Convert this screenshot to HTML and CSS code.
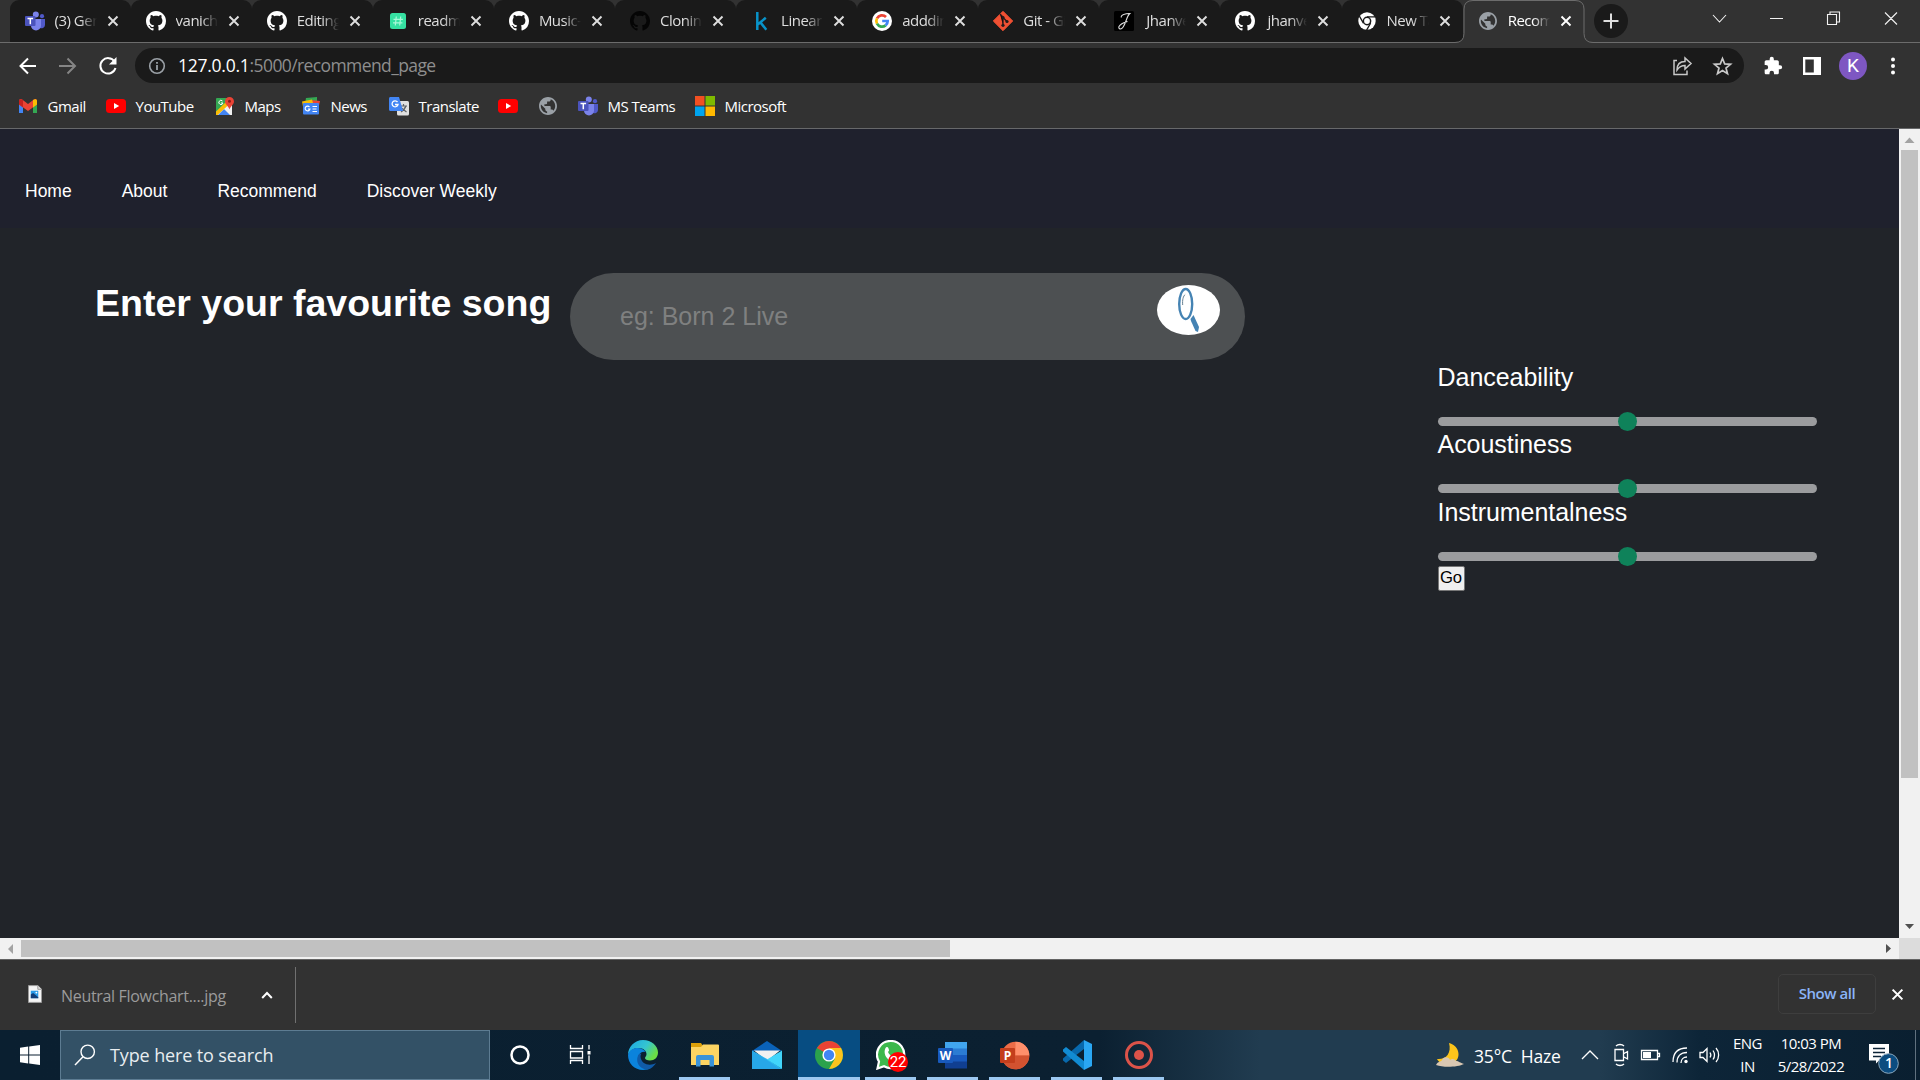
FILE: index.html
```html
<!DOCTYPE html>
<html lang="en">
<head>
<meta charset="utf-8">
<title>Recommend</title>
<link rel="stylesheet" href="styles.css">
</head>
<body>
<svg class="defs" aria-hidden="true">
  <symbol id="github" viewBox="0 0 16 16"><path fill="currentColor" d="M8 0C3.58 0 0 3.58 0 8c0 3.54 2.29 6.53 5.47 7.59.4.07.55-.17.55-.38 0-.19-.01-.82-.01-1.49-2.01.37-2.53-.49-2.69-.94-.09-.23-.48-.94-.82-1.13-.28-.15-.68-.52-.01-.53.63-.01 1.08.58 1.23.82.72 1.21 1.87.87 2.33.66.07-.52.28-.87.51-1.07-1.78-.2-3.64-.89-3.64-3.95 0-.87.31-1.59.82-2.15-.08-.2-.36-1.02.08-2.12 0 0 .67-.21 2.2.82.64-.18 1.32-.27 2-.27s1.36.09 2 .27c1.53-1.04 2.2-.82 2.2-.82.44 1.1.16 1.92.08 2.12.51.56.82 1.27.82 2.15 0 3.07-1.87 3.75-3.65 3.95.29.25.54.73.54 1.48 0 1.07-.01 1.93-.01 2.2 0 .21.15.46.55.38A8.01 8.01 0 0 0 16 8c0-4.42-3.58-8-8-8z"/></symbol>
  <symbol id="close" viewBox="0 0 12 12"><path d="M1.5 1.5l9 9M10.5 1.5l-9 9" stroke="currentColor" stroke-width="1.9" fill="none"/></symbol>
  <symbol id="globe" viewBox="2 2 20 20"><path fill="#9aa0a6" d="M12 2C6.48 2 2 6.48 2 12s4.480 10 10 10 10-4.480 10-10S17.520 2 12 2zm-1 17.930c-3.950-.49-7-3.850-7-7.930 0-.62.08-1.210.21-1.790L9 15v1c0 1.100.9 2 2 2v1.930zm6.900-2.540c-.26-.81-1-1.390-1.900-1.390h-1v-3c0-.55-.45-1-1-1H8v-2h2c.55 0 1-.45 1-1V7h2c1.100 0 2-.9 2-2v-.41c2.930 1.190 5 4.060 5 7.410 0 2.080-.8 3.970-2.100 5.390z"/></symbol>
  <symbol id="teams" viewBox="0 0 20 20"><circle cx="17" cy="5.2" r="2.1" fill="#5059c9"/><circle cx="10.8" cy="3.4" r="3" fill="#7b83eb"/><path d="M14.5 8H20v6a3.3 3.3 0 0 1-5.5 2.4z" fill="#5059c9"/><path d="M6 8h10v6.500a5 5 0 0 1-10 0z" fill="#7b83eb"/><rect y="5" width="10.5" height="10" rx="1" fill="#4b53bc"/><path d="M2.500 7.500h5.600M5.300 7.500v5.700" stroke="#fff" stroke-width="1.5"/></symbol>
  <symbol id="youtube" viewBox="0 0 20 20"><rect y="3" width="20" height="14" rx="3.5" fill="#f00"/><path d="M8 7l5.200 3L8 13z" fill="#fff"/></symbol>
</svg>

<header class="chrome">
  <div class="tabs">
    <div class="tab"><svg class="ico"><use href="#teams"/></svg><span class="title">(3) General</span><svg class="x"><use href="#close"/></svg></div>
    <div class="tab"><svg class="ico"><use href="#github"/></svg><span class="title">vanicha</span><svg class="x"><use href="#close"/></svg></div>
    <div class="tab"><svg class="ico"><use href="#github"/></svg><span class="title">Editing</span><svg class="x"><use href="#close"/></svg></div>
    <div class="tab"><svg class="ico" viewBox="0 0 20 20"><rect x="2" y="2" width="16" height="16" rx="2.5" fill="#35e0a1"/><path d="M8.300 5.500l-1 9M12.700 5.500l-1 9M5.500 8.300h9.400M5 11.800h9.400" stroke="#a8f8d8" stroke-width="1.2"/></svg><span class="title">readme</span><svg class="x"><use href="#close"/></svg></div>
    <div class="tab"><svg class="ico"><use href="#github"/></svg><span class="title">Music-R</span><svg class="x"><use href="#close"/></svg></div>
    <div class="tab"><svg class="ico black"><use href="#github"/></svg><span class="title">Cloning</span><svg class="x"><use href="#close"/></svg></div>
    <div class="tab"><svg class="ico" viewBox="0 0 20 20"><path d="M6.300 1v18M14.800 6.800L7 13.300M9.300 11.200l6 7.600" fill="none" stroke="#0893c9" stroke-width="2.5"/></svg><span class="title">Linear R</span><svg class="x"><use href="#close"/></svg></div>
    <div class="tab"><svg class="ico" viewBox="0 0 20 20"><circle cx="10" cy="10" r="10" fill="#fff"/><g fill="none" stroke-width="2.7"><path d="M5 7.300A5.700 5.700 0 0 1 14 6" stroke="#ea4335"/><path d="M5 7.300a5.700 5.700 0 0 0 0 5.400" stroke="#fbbc05"/><path d="M5 12.700a5.700 5.700 0 0 0 8.600 1.700" stroke="#34a853"/><path d="M10.200 10h5.500a5.700 5.700 0 0 1-2.100 4.400" stroke="#4285f4"/></g></svg><span class="title">addding</span><svg class="x"><use href="#close"/></svg></div>
    <div class="tab"><svg class="ico" viewBox="0 0 20 20"><path d="M10 .3L19.700 10 10 19.700.3 10z" fill="#f05033" stroke="#f05033" stroke-linejoin="round"/><path d="M7 3l3 3v8M10 6.500l4 4" stroke="#241a1a" stroke-width="1.3"/><circle cx="10" cy="6.5" r="1.6" fill="#241a1a"/><circle cx="10" cy="14.3" r="1.6" fill="#241a1a"/><circle cx="14" cy="10.5" r="1.6" fill="#241a1a"/></svg><span class="title">Git - Gi</span><svg class="x"><use href="#close"/></svg></div>
    <div class="tab"><svg class="ico" viewBox="0 0 20 20"><rect width="20" height="20" rx="1.5" fill="#000"/><path d="M7.400 6.500C6 4 12 2.300 15.800 2.500 12.800 5 12 12 9 16.300c-2 2.800-5 1.700-4-.8 1-2 5-4 8.500-5" fill="none" stroke="#ddd" stroke-width="1.1"/></svg><span class="title jh">Jhanvee</span><svg class="x"><use href="#close"/></svg></div>
    <div class="tab"><svg class="ico"><use href="#github"/></svg><span class="title jh">jhanvee</span><svg class="x"><use href="#close"/></svg></div>
    <div class="tab"><svg class="ico" viewBox="0 0 20 20"><circle cx="10" cy="10" r="8.7" fill="#fff"/><circle cx="10" cy="10" r="4.4" fill="#1a1a1a"/><circle cx="10" cy="10" r="2.9" fill="#fff"/><path d="M10 5.800h8M6.400 12.100l-4-7M13.600 12.100l-4 7" stroke="#1a1a1a" stroke-width="1.3"/></svg><span class="title">New Tab</span><svg class="x"><use href="#close"/></svg></div>
    <div class="tab active"><svg class="shape" viewBox="0 0 140 43"><path d="M0 42.500q9 0 9-9V9q0-8.500 9-8.500h102q9 0 9 8.500v24.500q0 9 9 9h2V43H0z" fill="#323232"/><path d="M0 42.500q9 0 9-9V9q0-8.500 9-8.500h102q9 0 9 8.500v24.500q0 9 9 9h2" fill="none" stroke="#6c6c6c"/></svg><svg class="ico small"><use href="#globe"/></svg><span class="title">Recommend</span><svg class="x"><use href="#close"/></svg></div>
    <div class="newtab"><svg viewBox="0 0 34 34"><path d="M17 9.500v15M9.500 17h15" stroke="#dedede" stroke-width="2"/></svg></div>
    <svg class="winbtns" viewBox="0 0 220 42"><path d="M13 15l6.500 7 6.500-7M70 18.500h13M127.500 14.500h9v10h-9zM130 14.500v-2.500h9.500v10H137M185 12.500l12 12M197 12.500l-12 12" fill="none" stroke="#f2f2f2" stroke-width="1.100"/></svg>
  </div>

  <div class="toolbar">
    <svg class="navicons" viewBox="0 0 127 36"><g fill="none" stroke-width="2"><path d="M36 18H21M28 10.500L20.500 18l7.500 7.500" stroke="#fff"/><path d="M59 18h15M67.500 10.500L75 18l-7.500 7.500" stroke="#858585"/><path d="M114.500 13.500a7.700 7.700 0 1 0 1 6.500" stroke="#fff"/></g><path d="M116.500 9v7.500H109z" fill="#fff"/></svg>
    <div class="omnibox">
      <svg class="info" viewBox="0 0 18 18"><circle cx="9" cy="9" r="7.300" fill="none" stroke="#9aa0a6" stroke-width="1.600"/><path d="M9 8v5M9 5v1.700" stroke="#9aa0a6" stroke-width="1.800"/></svg>
      <span class="url"><b>127.0.0.1</b>:5000/recommend_page</span>
      <svg class="omniicons" viewBox="0 0 64 36"><g fill="none" stroke="#c8c8c8" stroke-width="1.500"><path d="M6 12.500H3v14h13v-4M6 22c0-6 3-8.500 8-8.500V10l6 5.500-6 5.500v-3.500c-4 0-6 1.500-8 4.500z"/><path d="M51.500 10.500l2.200 5.400 5.800.4-4.500 3.700 1.500 5.700-5-3.200-5 3.200 1.500-5.700-4.500-3.700 5.800-.4z" stroke-width="1.700"/></g></svg>
    </div>
    <svg class="ext" viewBox="0 0 24 24"><path fill="#fff" d="M20.500 11H19V7c0-1.100-.9-2-2-2h-4V3.500a2.500 2.500 0 0 0-5 0V5H4c-1.100 0-2 .9-2 2v3.800h1.500a2.700 2.700 0 0 1 0 5.400H2V20c0 1.100.9 2 2 2h3.800v-1.500a2.700 2.700 0 0 1 5.400 0V22H17c1.100 0 2-.9 2-2v-4h1.500a2.500 2.500 0 0 0 0-5z"/></svg>
    <svg class="panel" viewBox="0 0 18 18"><path fill="#fff" fill-rule="evenodd" d="M0 0h18v18H0zM2.300 2.500v13h8.500v-13z"/></svg>
    <span class="avatar">K</span>
    <svg class="dots" viewBox="0 0 6 18"><circle cx="3" cy="2.500" r="2" fill="#fff"/><circle cx="3" cy="9" r="2" fill="#fff"/><circle cx="3" cy="15.500" r="2" fill="#fff"/></svg>
  </div>

  <nav class="bookmarks">
    <a class="bm gmail"><svg viewBox="0 0 20 20"><path d="M1 5v12h4V8z" fill="#4285f4"/><path d="M15 8v9h4V5z" fill="#34a853"/><path d="M1 5v3.500l9 6.500 9-6.500V5c0-2-2-2.500-3.500-1.300L10 8 4.500 3.700C3 2.500 1 3 1 5z" fill="#ea4335"/><path d="M1 5v3.500l4 3V4C3 2.500 1 3 1 5z" fill="#c5221f"/><path d="M15 4v7.500l4-3V5c0-2-2-2.500-4-1z" fill="#fbbc04"/></svg>Gmail</a>
    <a class="bm yt"><svg><use href="#youtube"/></svg>YouTube</a>
    <a class="bm maps"><svg viewBox="0 0 20 20"><rect x="1" y="2" width="16" height="17" rx="1" fill="#34a853"/><path d="M1 18L14 5l3 3v11H2z" fill="#f1f1f1"/><path d="M3 19l6-6 6 6z" fill="#4285f4"/><path d="M1 15.500L11 6l3 2.500L2.500 19H1z" fill="#fbbc04"/><path d="M7.500 5A2.100 2.100 0 1 0 8 7H6" fill="none" stroke="#fff"/><path d="M14.500 1a4.500 4.500 0 0 0-4.500 4.500c0 3 3.500 4.500 4.500 8 1-3.500 4.500-5 4.500-8A4.500 4.500 0 0 0 14.500 1z" fill="#ea4335"/><circle cx="14.500" cy="5.300" r="1.500" fill="#8c1d18"/></svg>Maps</a>
    <a class="bm news"><svg viewBox="0 0 20 20"><path d="M5 2l11-1v7H4z" fill="#34a853"/><path d="M10 4l9 1-1.500 7H8z" fill="#ea4335"/><path d="M1 5.500l10-2 2 7H2z" fill="#fbbc04"/><rect x="2" y="7" width="16" height="11.500" rx="1" fill="#4285f4"/><path d="M8.500 11a2.400 2.400 0 1 0 .4 2H7M11.500 10.500H16M11.500 13h4M11.500 15.500H16" stroke="#fff" stroke-width="1.200" fill="none"/></svg>News</a>
    <a class="bm translate"><svg viewBox="0 0 20 20"><rect x="8" y="5" width="12" height="14.500" rx="1.500" fill="#e0e0e0"/><path d="M11 10h7M14.500 8v2M17 10c-1 3-3 5-5 6M12.500 12l5 4" stroke="#5f6368" stroke-width="1.200"/><path d="M1.500 1H10l4 14H1.500C.6 15 0 14.400 0 13.500v-11C0 1.600.6 1 1.500 1z" fill="#4285f4"/><path d="M8.500 6A3 3 0 1 0 9 8.500H6" stroke="#fff" stroke-width="1.300" fill="none"/></svg>Translate</a>
    <a class="bm solo"><svg><use href="#youtube"/></svg></a>
    <a class="bm solo globe"><svg><use href="#globe"/></svg></a>
    <a class="bm msteams"><svg><use href="#teams"/></svg>MS Teams</a>
    <a class="bm"><svg viewBox="0 0 20 20"><path d="M0 0h9.500v9.500H0z" fill="#f25022"/><path d="M10.500 0H20v9.500h-9.500z" fill="#7fba00"/><path d="M0 10.500h9.500V20H0z" fill="#00a4ef"/><path d="M10.500 10.500H20V20h-9.500z" fill="#ffb900"/></svg>Microsoft</a>
  </nav>
</header>

<div class="viewport">
  <main class="page">
    <nav class="sitenav"><a>Home</a><a>About</a><a>Recommend</a><a>Discover Weekly</a></nav>
    <div class="content">
      <h1>Enter your favourite song</h1>
      <form class="search"><span class="placeholder">eg: Born 2 Live</span>
        <span class="go-search"><svg viewBox="0 0 63 50"><ellipse cx="28.700" cy="19" rx="6.500" ry="15" fill="#fff" stroke="#4583b3" stroke-width="2.400"/><path d="M25.700 20c-.5-5 .5-9 2.500-10.500" fill="none" stroke="#667f91" stroke-width="1"/><path d="M33.500 34L36.500 30l5.500 12-1 5-2.500-1-4.500-10z" fill="#4583b3"/></svg></span>
      </form>
      <section class="features">
        <label>Danceability</label><div class="range"><i></i></div>
        <label>Acoustiness</label><div class="range"><i></i></div>
        <label>Instrumentalness</label><div class="range"><i></i></div>
        <button>Go</button>
      </section>
    </div>
  </main>
  <div class="vbar"><svg viewBox="0 0 21 21"><path d="M5.500 14h10l-5-5.500z" fill="#a3a3a3"/></svg><div class="vthumb"></div><svg viewBox="0 0 21 21"><path d="M6 7h9l-4.500 5z" fill="#505050"/></svg></div>
  <div class="hbar"><svg viewBox="0 0 21 21"><path d="M13 6v10l-5-5z" fill="#a3a3a3"/></svg><div class="hthumb"></div><svg viewBox="0 0 21 21"><path d="M8 6v9l5-4.500z" fill="#505050"/></svg></div>
  <div class="corner"></div>
</div>

<div class="downloads">
  <svg class="file" viewBox="0 0 15 19"><path d="M.5.500h10l4 4v14H.5z" fill="#f5f5f5" stroke="#9b9b9b"/><path d="M10.500.500v4h4" fill="#ddd" stroke="#9b9b9b"/><rect x="3" y="6" width="8" height="8" fill="#2b9be8"/><path d="M3 14v-4l2.500-1.500L11 13v1z" fill="#123d78"/><circle cx="9" cy="8" r="1" fill="#fff"/></svg>
  <span class="fname">Neutral Flowchart....jpg</span>
  <svg class="caret" viewBox="0 0 12 8"><path d="M1.200 7L6 2l4.800 5" fill="none" stroke="#fff" stroke-width="2"/></svg>
  <span class="divider"></span>
  <button class="showall">Show all</button>
  <svg class="dclose"><use href="#close"/></svg>
</div>

<footer class="taskbar">
  <div class="start"><svg viewBox="0 0 20 20"><path d="M0 2.800l8.200-1.200v8H0zM9.200 1.500L20 0v9.600H9.200zM0 10.600h8.200v8L0 17.300zM9.200 10.600H20V20L9.200 18.600z" fill="#fff"/></svg></div>
  <div class="tsearch"><svg viewBox="0 0 22 22"><circle cx="13.700" cy="7.800" r="6.700" fill="none" stroke="#fff" stroke-width="1.400"/><path d="M9 12.800L1 21" stroke="#fff" stroke-width="1.500"/></svg>Type here to search</div>
  <div class="app"><svg viewBox="0 0 30 30"><circle cx="15" cy="15" r="8.500" fill="none" stroke="#fff" stroke-width="2.500"/></svg></div>
  <div class="app"><svg viewBox="0 0 30 30"><path d="M4.500 5v3.500h12V5M4.500 24v-3.500h12V24M4.500 11.500h12v6.500h-12zM23 5v4.500M23 15.500V24" fill="none" stroke="#fff" stroke-width="1.300"/><path d="M21.500 11h3v3.500h-3z" fill="#fff"/></svg></div>
  <div class="app"><svg viewBox="0 0 30 30"><defs><linearGradient id="eg" x1="0" x2="1" y1="0" y2=".5"><stop offset="0" stop-color="#1aa6e6"/><stop offset=".6" stop-color="#35c5d0"/><stop offset="1" stop-color="#6bde45"/></linearGradient></defs><path d="M0 15C0 7 6.500 0 15 0s15 6 15 12.500c0 5-3.500 8-8 8-3 0-5-1-5-2.500 0-1 1.500-1.500 1.500-4 0-3-3-6-8-6C5 8 1.500 11 0 15z" fill="url(#eg)"/><path d="M0 15c1-4.500 5-7 9.500-7 4 0 7 2 8.300 4-6-1-8.500 4-7 8.500 1.500 5 7 8.500 12.200 7.500-2 1.300-5 2-8 2C6.500 30 0 23.500 0 15z" fill="#0b83dc"/><path d="M11 14c-2.500 3.500-2.500 8.500.5 12 3 3.500 8 4.200 11 2.500 2-1.200 4.500-3.500 5.500-5.500-6 3.500-15 1.500-15.500-6.500 0-1 .3-2 .8-3z" fill="#105ba8"/></svg></div>
  <div class="app run"><svg viewBox="0 0 30 30"><path d="M1 3h10l2 3v3H1z" fill="#dca009"/><path d="M1 7h10l2-2.500h15q1 0 1 1V25H1z" fill="#fcd462"/><path d="M6 26.500V17q0-2 2-2h14q2 0 2 2v9.500h-4.500V20h-9v6.500z" fill="#3a93d8"/></svg></div>
  <div class="app"><svg viewBox="0 0 30 30"><path d="M0 11L15 1l15 10z" fill="#0a62b8"/><path d="M2 10.500h26L15 21z" fill="#f1f1f1"/><path d="M0 10.500l16 9L30 29H0z" fill="#2bb4ef"/><path d="M30 10.500V29L15 19.500z" fill="#41d5fb"/><path d="M0 10.500V29h28z" fill="#27a7e8"/></svg></div>
  <div class="app current"><svg viewBox="0 0 30 30"><circle cx="15" cy="15" r="14" fill="#2ba24c"/><path d="M15 15L2.900 8a14 14 0 0 1 24.200 0z" fill="#ea4335"/><path d="M15 8h12.100A14 14 0 0 1 15 29l6-10.500z" fill="#fcc31e"/><circle cx="15" cy="15" r="6.600" fill="#fff"/><circle cx="15" cy="15" r="5.200" fill="#4285f4"/></svg></div>
  <div class="app run"><svg viewBox="0 0 30 30"><path d="M15 1a13.500 13.500 0 1 1-7 25.200L1.500 28.500 3 21.500A13.500 13.500 0 0 1 15 1z" fill="#3cb84c" stroke="#fff" stroke-width="2.200"/><path d="M9.500 8c1-1.500 2.500-1 3 .5.800 2 .8 2-.5 3.500 1 2.500 3 4 5 5l-2 4C10 19 7 13 9.500 8z" fill="#fff"/></svg><span class="count">22</span></div>
  <div class="app run"><svg viewBox="0 0 30 30"><rect x="7" y="2" width="22" height="7" fill="#41a5ee"/><rect x="7" y="8.500" width="22" height="7" fill="#2b7cd3"/><rect x="7" y="15" width="22" height="7" fill="#185abd"/><rect x="7" y="21.500" width="22" height="7" fill="#103f91"/><rect x="0" y="8" width="15" height="15" rx="1" fill="#185abd"/><text x="7.500" y="19.500" text-anchor="middle" class="letter">W</text></svg></div>
  <div class="app run"><svg viewBox="0 0 30 30"><circle cx="15.500" cy="15.500" r="13.800" fill="#ed6c47"/><path d="M15.500 1.700a13.800 13.800 0 0 1 13.800 13.800H15.500z" fill="#ff8f6b"/><path d="M1.700 15.500h27.600a13.800 13.800 0 0 1-27.600 0z" fill="#d35230"/><rect x="0" y="8" width="15" height="15" rx="1" fill="#c43e1c"/><text x="7.500" y="19.500" text-anchor="middle" class="letter">P</text></svg></div>
  <div class="app run"><svg viewBox="0 0 30 30"><path d="M22 0l8 4v22l-8 4z" fill="#2aa7f3"/><path d="M22 0v9L4 23l-3-2.500v-2z" fill="#0869ad"/><path d="M22 30v-9L4 7 1 9.500v2z" fill="#118bd3"/></svg></div>
  <div class="app run"><svg viewBox="0 0 30 30"><circle cx="15" cy="15" r="12.500" fill="none" stroke="#dc5349" stroke-width="3"/><circle cx="15" cy="15" r="5" fill="#dc5349"/></svg></div>
  <div class="tray">
    <svg class="moon" viewBox="0 0 30 26"><path d="M14 1c9 2 13 13 6 19-5 4-14 4-18-3 8 1 15-5 12-16z" fill="#fcc41a"/><path d="M1 23c2-4 5-3 6-5 2-4 7-3 8 0 2-2 5-1 6 1 3 0 4 2 8 3-6 3-20 4-28 1z" fill="#d9c7b2"/></svg>
    <span class="weather">35°C&nbsp; Haze</span>
    <svg class="sys" viewBox="0 0 150 30"><g fill="none" stroke="#fff" stroke-width="1.300"><path d="M8 19l8-8 8 8"/><path d="M41 9.500h8.500v11H41zM50 13.500l3.500-2v7.500l-3.500-2M42 6c2-2 6-2 8 0M42 24c2 2 6 2 8 0"/><path d="M67.500 10.500h16v9h-16zM83.500 13.500h2v3h-2"/><path d="M99 22c0-9 5-14 14-14M103 22.500c0-6 3.500-10 10-10M107 23c0-3.500 2.500-6 6-6"/><path d="M126 12.500h3l4-4v13l-4-4h-3zM136 12.500c1 1.500 1 3.500 0 5M139 10.500c2 3 2 6 0 9M142 8c3.500 4 3.500 10 0 14"/></g><path d="M69 12h8v6h-8z" fill="#fff"/><circle cx="112" cy="21.500" r="1.700" fill="#fff"/></svg>
    <span class="lang">ENG<br>IN</span>
    <span class="clock">10:03 PM<br>5/28/2022</span>
    <span class="notif"><svg viewBox="0 0 32 32"><path d="M1 1h20v16.500H11l-3 3v-3H1z" fill="#fff"/><path d="M5 5.500h12M5 9.500h12M5 13.500h8" stroke="#0c2337" stroke-width="1.300"/><circle cx="20.500" cy="20.500" r="9.800" fill="#0b4c80" stroke="#8ba8bd"/></svg><b>1</b></span>
    <span class="peek"></span>
  </div>
</footer>
</body>
</html>
```
FILE: styles.css
```css
* { box-sizing: border-box; }
body { margin: 0; width: 1920px; height: 1080px; overflow: hidden; display: flex; flex-direction: column; background: #212429; font-family: "Open Sans", "Noto Sans", sans-serif; color: #fff; }
svg { display: block; flex: none; }
.defs { width: 0; height: 0; position: absolute; }

.chrome { height: 129px; background: #323232; border-bottom: 1px solid #67686a; }
.tabs { display: flex; height: 43px; padding-left: 9.500px; border-bottom: 1px solid #6c6c6c; }
.tab { position: relative; width: 121.100px; height: 42px; flex: none; display: flex; align-items: center; padding-left: 15px; background: #1a1a1a; border-radius: 9px 9px 0 0; font-size: 15px; }
.tab::after { content: ""; position: absolute; right: -1.500px; top: 9px; width: 1px; height: 25px; background: #5c5c5c; }
.tab:nth-child(12)::after, .tab.active::after { display: none; }
.ico { width: 20px; height: 20px; }
.ico.small { width: 18px; height: 18px; margin: 0 1px; }
.ico.black { color: #050505; }
.title { width: 42px; margin: -2px 0 0 10px; overflow: hidden; white-space: nowrap; letter-spacing: -.5px; color: #dedede; -webkit-mask-image: linear-gradient(90deg, #000 60%, transparent); mask-image: linear-gradient(90deg, #000 60%, transparent); }
.jh { text-indent: 2px; }
.x { width: 12px; height: 12px; margin-left: 10px; color: #dedede; }
.active { background: none; z-index: 1; }
.active .ico, .active .title, .active .x { position: relative; }
.active .title, .active .x { color: #fff; }
.shape { position: absolute; left: -7.600px; top: 0; width: 140px; height: 43px; }
.newtab { width: 34px; height: 34px; border-radius: 50%; background: #1a1a1a; margin: 4px 0 0 10.200px; }
.winbtns { width: 220px; height: 42px; margin-left: 72px; }

.toolbar { display: flex; align-items: center; height: 45px; }
.navicons { width: 127px; height: 36px; }
.omnibox { width: 1609px; height: 35px; margin-left: 8px; display: flex; align-items: center; padding: 0 9px 0 13px; border-radius: 18px; background: #1a1a1a; }
.info { width: 18px; height: 18px; }
.url { flex: 1; margin: -1px 0 0 12px; font-size: 17.500px; letter-spacing: -.6px; color: #8e8e8e; }
.url b { font-weight: 400; letter-spacing: -.25px; color: #fff; }
.omniicons { width: 64px; height: 36px; }
.ext { width: 20px; height: 20px; margin-left: 19px; }
.panel { width: 18px; height: 18px; margin-left: 20px; }
.avatar { width: 28px; height: 28px; margin-left: 18px; border-radius: 50%; background: #7e57c2; text-align: center; font: 19px/28px Roboto, sans-serif; }
.dots { width: 6px; height: 18px; margin-left: 23px; }

.bookmarks { display: flex; height: 35px; padding-left: 18px; font-size: 15px; letter-spacing: -.5px; }
.bm { display: flex; align-items: center; gap: 9.500px; white-space: nowrap; }
.bm svg { width: 20px; height: 20px; }
.gmail { width: 88px; }
.yt, .translate { width: 109px; }
.maps { width: 86px; }
.news { width: 88px; }
.solo { width: 40px; }
.globe svg { width: 18px; height: 18px; margin-left: 1px; }
.msteams { width: 117px; }

.viewport { height: 830px; display: grid; grid-template-columns: 1899px 21px; grid-template-rows: 809px 21px; }
.page { overflow: hidden; background: #212429; font-family: "Liberation Sans", Arial, sans-serif; }
.sitenav { display: flex; gap: 50px; height: 99px; padding: 51px 0 0 25px; background: #1f212d; font-size: 17.500px; line-height: 22px; }
.content { display: flex; align-items: flex-start; padding: 45px 0 0 95px; }
h1 { width: 475px; margin: 9px 0 0; font-size: 37.500px; line-height: 43px; white-space: nowrap; }
.search { display: flex; width: 675px; height: 87px; padding: 12px 25px 0 50px; border-radius: 44px; background: #4d5052; }
.placeholder { flex: 1; font-size: 25px; line-height: 62px; color: #7f8080; }
.go-search { width: 63px; height: 50px; border-radius: 50%; background: #fff; }
.features { width: 380px; margin: 88px 0 0 192.500px; display: flex; flex-direction: column; }
.features label { height: 56px; line-height: 33px; font-size: 25px; letter-spacing: -.04px; }
.range { display: flex; align-items: center; justify-content: center; width: 379px; height: 9px; margin-bottom: 2.300px; border-radius: 5px; background: #9b9c9e; }
.range i { width: 19px; height: 19px; flex: none; border-radius: 50%; background: #0f825a; }
.features button { width: 27px; height: 25px; margin-top: 3px; padding: 0 0 1px; border: 1px solid #777; border-radius: 2px; background: #efefef; font: 16.670px "Liberation Sans", Arial, sans-serif; color: #000; }
.vbar { display: flex; flex-direction: column; justify-content: space-between; background: #f1f1f1; }
.vbar svg, .hbar svg { width: 21px; height: 21px; }
.vthumb { width: 17px; height: 628px; margin: 0 auto auto 2px; background: #c1c1c1; }
.hbar { display: flex; background: #f1f1f1; }
.hthumb { width: 929px; height: 17px; margin: 2px auto 0 0; background: #c1c1c1; }
.corner { background: #dcdcdc; }

.downloads { display: flex; align-items: center; height: 71px; padding: 0 16px 0 28px; border-top: 1px solid #636363; background: #323232; }
.file { width: 14px; height: 18px; margin-top: -2px; }
.fname { width: 165px; margin: 1px 0 0 19px; font-size: 16px; letter-spacing: -.32px; color: #9b9b9b; white-space: nowrap; }
.caret { width: 12px; height: 8px; margin-left: 35px; }
.divider { width: 1px; height: 56px; margin-left: 22px; background: #707070; }
.showall { width: 98px; height: 40px; margin: -2px 15px 0 auto; padding: 0 0 2px; border: 1px solid #3e3e3e; border-radius: 5px; background: none; color: #8ab4f8; font: 600 15px "Open Sans", sans-serif; letter-spacing: -.45px; }
.dclose { width: 13px; height: 13px; margin-top: -2px; }

.taskbar { display: flex; height: 50px; background: linear-gradient(90deg, #0a1f30 0, #0b2031 1100px, #213c50 1260px, #213c50 1600px, #0d2538 1700px, #0a1f30 1920px); }
.start { width: 60px; padding: 15px 20px; }
.start svg { width: 20px; height: 20px; }
.tsearch { display: flex; align-items: center; width: 430px; padding-left: 13px; border: 1px solid #5d7c92; background: #335166; font-size: 18px; letter-spacing: -.12px; color: #e8edf0; }
.tsearch svg { width: 22px; height: 22px; margin-right: 14px; }
.app { position: relative; display: flex; align-items: center; justify-content: center; width: 62px; flex: none; }
.app:nth-child(3) { width: 60px; }
.app > svg { width: 30px; height: 30px; }
.run::after, .current::after { content: ""; position: absolute; left: 5px; right: 6px; bottom: 0; height: 3px; background: #9cc8f1; }
.current { background: #074d82; }
.current::after { left: 0; right: 0; }
.letter { font: 700 12px "Open Sans", sans-serif; fill: #fff; }
.count { position: absolute; left: 28px; top: 22px; width: 20px; height: 20px; border-radius: 50%; background: #f00; text-align: center; font: 15px/20px Roboto, sans-serif; letter-spacing: -.3px; }
.tray { display: flex; align-items: center; margin-left: auto; }
.moon { width: 30px; height: 26px; }
.weather { width: 100px; margin: 1px 0 0 9px; font-size: 17.500px; letter-spacing: -.15px; white-space: nowrap; }
.sys { width: 150px; height: 30px; }
.lang, .clock { margin-top: -1px; font-size: 15px; line-height: 22.500px; text-align: center; letter-spacing: -.5px; }
.lang { width: 47px; }
.clock { width: 80px; }
.notif { position: relative; width: 32px; height: 32px; margin: 8px 0 0 17px; }
.notif b { position: absolute; left: 11px; top: 10px; width: 20px; text-align: center; font: 600 14px/20px "Open Sans", sans-serif; }
.peek { width: 1px; height: 50px; margin: 0 4px 0 15px; background: #60717f; }
```
